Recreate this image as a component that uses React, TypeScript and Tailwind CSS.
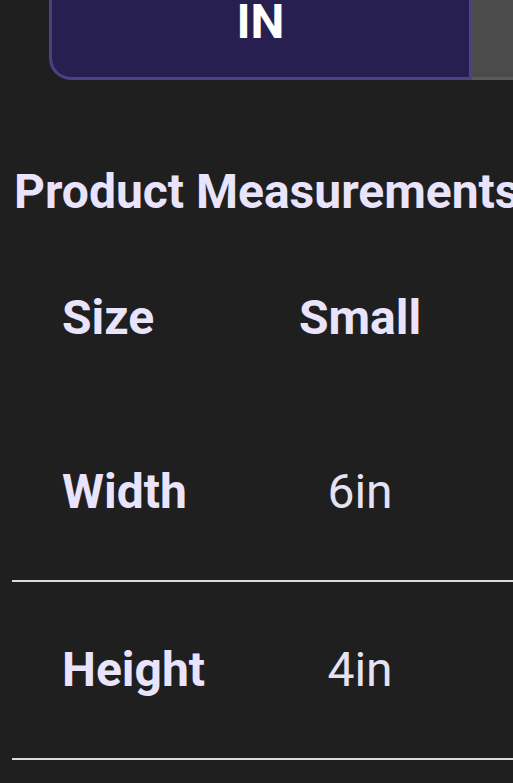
const rows = [
  { label: 'Width', value: '6in' },
  { label: 'Height', value: '4in' },
]

export default function App() {
  return (
    <div
      className="min-h-[783px] w-[513px] overflow-hidden bg-[#1f1f1f] text-[#e9e3fb]"
      style={{ fontFamily: 'Roboto, "Noto Sans", sans-serif' }}
    >
      <div className="flex">
        <div className="ml-[49px] flex h-[80px] w-[423px] justify-center rounded-bl-[22px] border-[3px] border-t-0 border-[#4a4283] bg-[#271f50]">
          <span className="-mt-[2px] text-[48px] font-bold leading-none text-white">IN</span>
        </div>
        <div className="h-[80px] flex-1 border-b-[3px] border-[#5a5a5a] bg-[#4b4b4b]"></div>
      </div>

      <h2 className="mt-[88px] whitespace-nowrap pl-[14px] text-[48px] font-bold leading-none">
        Product Measurements
      </h2>

      <div className="mt-[16px] pl-[12px]">
        <div className="grid h-[172px] grid-cols-[228px_240px_1fr] items-center text-[48px] font-bold leading-none">
          <span className="pl-[50px]">Size</span>
          <span className="text-center">Small</span>
        </div>
        {rows.map((row) => (
          <div
            key={row.label}
            className="grid h-[178px] grid-cols-[228px_240px_1fr] items-center border-b-2 border-[#dcdcdc] text-[48px] leading-none"
          >
            <span className="pl-[50px] font-bold">{row.label}</span>
            <span className="text-center text-[#e6e2f2]">{row.value}</span>
          </div>
        ))}
      </div>
    </div>
  )
}
